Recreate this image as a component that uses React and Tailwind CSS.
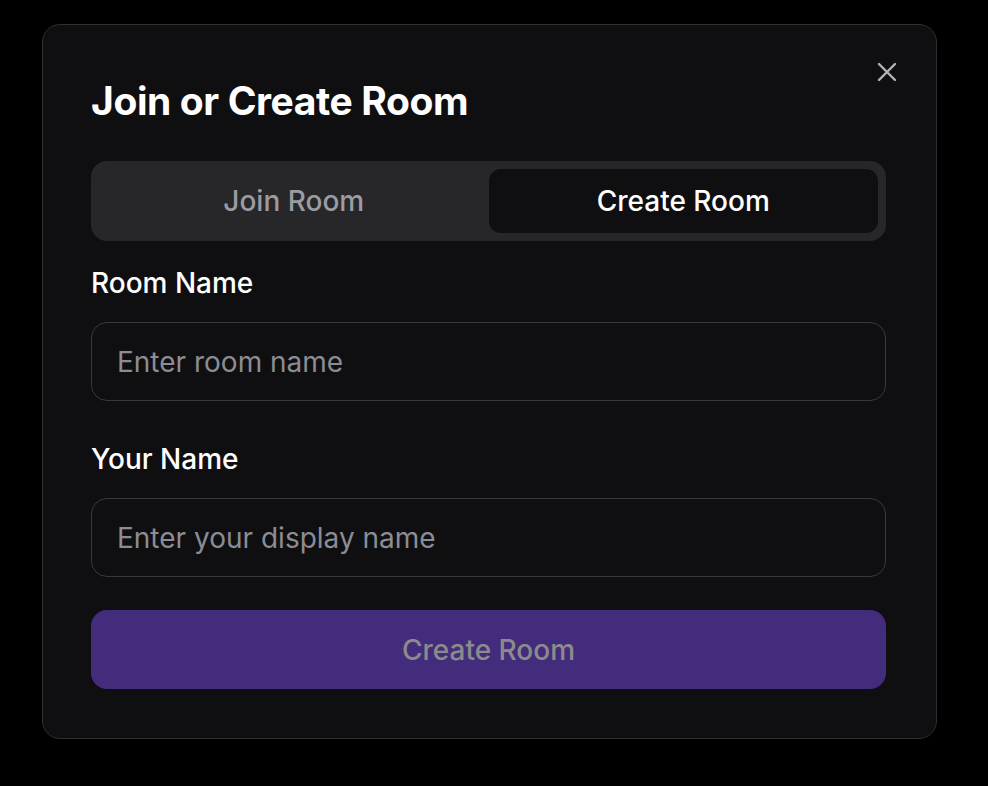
function Field({ label, placeholder, className = '' }) {
  return (
    <div className={className}>
      <label className="block text-[28px] leading-[32px] font-medium text-white">{label}</label>
      <input
        type="text"
        placeholder={placeholder}
        className="mt-[23px] block w-full h-[79px] rounded-[16px] border border-[#38383e] bg-transparent px-[25px] text-[28px] text-white placeholder:text-[#8c8c94] outline-none"
      />
    </div>
  );
}

export default function App() {
  return (
    <div className="min-h-[786px] w-[988px] bg-black pt-[24px] pl-[42px] font-['Inter',sans-serif]">
      <div className="relative w-[895px] rounded-[18px] border border-[#2e2e33] bg-[#0f0f11] pl-[48px] pr-[50px] pt-[56px] pb-[49px]">
        <button className="absolute right-[39px] top-[37px] text-[#b4b4bb]">
          <svg width="20" height="20" viewBox="0 0 20 20" fill="none" stroke="currentColor" strokeWidth="2.4" strokeLinecap="round">
            <path d="M2 2L18 18M18 2L2 18" />
          </svg>
        </button>

        <h2 className="text-[39px] leading-[40px] font-bold tracking-[-0.4px] text-white">Join or Create Room</h2>

        <div className="mt-[40px] grid h-[80px] grid-cols-2 rounded-[16px] bg-[#27272a] p-[8px]">
          <button className="rounded-[12px] text-[28px] font-medium text-[#9b9ba3]">Join Room</button>
          <button className="rounded-[12px] bg-[#0f0f11] text-[28px] font-medium text-white">Create Room</button>
        </div>

        <Field label="Room Name" placeholder="Enter room name" className="mt-[26px]" />
        <Field label="Your Name" placeholder="Enter your display name" className="mt-[42px]" />

        <button className="mt-[33px] h-[79px] w-full rounded-[16px] bg-[#442c7c] text-[28px] font-medium text-[#8b8b8b]">
          Create Room
        </button>
      </div>
    </div>
  );
}
